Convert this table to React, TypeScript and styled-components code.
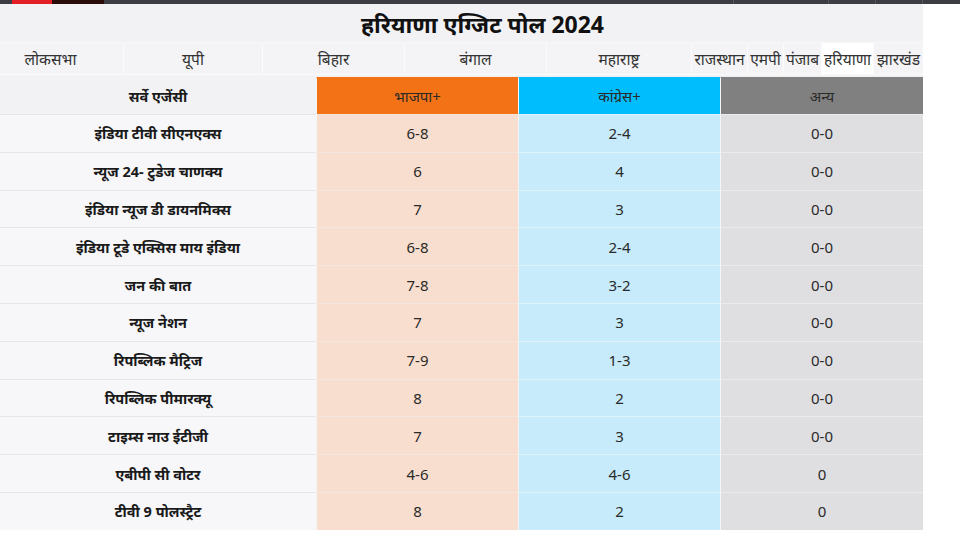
import React from 'react'
import styled, { createGlobalStyle } from 'styled-components'

const GlobalStyle = createGlobalStyle`
  html, body {
    margin: 0;
    padding: 0;
    background: #ffffff;
  }
  body {
    font-family: "Noto Sans", "Noto Sans Devanagari", "Open Sans", sans-serif;
    color: #222;
  }
`

const TopStrip = styled.div`
  height: 4px;
  background: #3b3d42;
  display: flex;
  padding-left: 12px;
`

const StripBlock = styled.div<{ $w: number; $c: string }>`
  width: ${(p) => p.$w}px;
  background: ${(p) => p.$c};
`

const StripSep = styled.div<{ $ml: number }>`
  width: 1px;
  margin-left: ${(p) => p.$ml}px;
  background: #55575c;
`

const Wrap = styled.div`
  width: 923px;
  background: #f2f2f4;
`

const Title = styled.h1`
  margin: 0;
  height: 38px;
  line-height: 40px;
  padding-left: 42px;
  text-align: center;
  font-size: 23px;
  font-weight: 700;
  color: #111;
`

const Tabs = styled.div`
  display: flex;
  height: 33px;
  border-top: 1px solid #f7f7f9;
  border-bottom: 1px solid #fbfbfc;
  box-sizing: border-box;
`

const Tab = styled.div<{ $w: number; $active?: boolean; $shift?: number }>`
  width: ${(p) => p.$w}px;
  flex: none;
  display: flex;
  align-items: center;
  justify-content: center;
  padding-right: ${(p) => p.$shift ?? 0}px;
  font-size: 15.5px;
  color: #333;
  white-space: nowrap;
  background: ${(p) => (p.$active ? '#ffffff' : '#f4f4f6')};
  border-right: 1px solid #fbfbfc;
  box-sizing: border-box;
  &:last-child {
    border-right: none;
  }
`

const Table = styled.div`
  margin-top: 2px;
  background: #ffffff;
`

const Row = styled.div<{ $head?: boolean }>`
  display: grid;
  grid-template-columns: 316px 202px 202px 1fr;
  height: ${(p) => (p.$head ? '37px' : '37.8px')};
`

const palette = {
  agency: { head: '#f2f2f4', body: '#f7f7f9', line: '#e6e6ea' },
  bjp: { head: '#f47216', body: '#f8dece', line: '#f3e6dc' },
  inc: { head: '#00bdfd', body: '#c7ebfa', line: '#e0f2fa' },
  oth: { head: '#808080', body: '#dfdfe1', line: '#ebebed' },
}

type Col = keyof typeof palette

const Cell = styled.div<{ $col: Col; $head?: boolean }>`
  display: flex;
  align-items: center;
  justify-content: center;
  font-size: ${(p) => (p.$col === 'agency' ? '14.5px' : '15px')};
  font-weight: ${(p) => (p.$col === 'agency' ? 700 : 400)};
  color: ${(p) => (p.$col === 'agency' ? '#1a1a1a' : '#2a2a2a')};
  background: ${(p) => (p.$head ? palette[p.$col].head : palette[p.$col].body)};
  border-top: 1px solid
    ${(p) => (p.$head ? palette[p.$col].head : palette[p.$col].line)};
  border-left: ${(p) => (p.$col === 'agency' ? 'none' : '1px solid #f5f5f5')};
  box-sizing: border-box;
  white-space: nowrap;
`

const tabs: [string, number][] = [
  ['लोकसभा', 124],
  ['यूपी', 139],
  ['बिहार', 142],
  ['बंगाल', 142],
  ['महाराष्ट्र', 145],
  ['राजस्थान', 56],
  ['एमपी', 36],
  ['पंजाब', 38],
  ['हरियाणा', 52],
  ['झारखंड', 49],
]

const rows: [string, string, string, string][] = [
  ['इंडिया टीवी सीएनएक्स', '6-8', '2-4', '0-0'],
  ['न्यूज 24- टुडेज चाणक्य', '6', '4', '0-0'],
  ['इंडिया न्यूज डी डायनमिक्स', '7', '3', '0-0'],
  ['इंडिया टूडे एक्सिस माय इंडिया', '6-8', '2-4', '0-0'],
  ['जन की बात', '7-8', '3-2', '0-0'],
  ['न्यूज नेशन', '7', '3', '0-0'],
  ['रिपब्लिक मैट्रिज', '7-9', '1-3', '0-0'],
  ['रिपब्लिक पीमारक्यू', '8', '2', '0-0'],
  ['टाइम्स नाउ ईटीजी', '7', '3', '0-0'],
  ['एबीपी सी वोटर', '4-6', '4-6', '0'],
  ['टीवी 9 पोलस्ट्रैट', '8', '2', '0'],
]

export default function App() {
  return (
    <>
      <GlobalStyle />
      <TopStrip>
        <StripBlock $w={40} $c="#e31e24" />
        <StripBlock $w={52} $c="#2b0b09" />
        <StripSep $ml={629} />
        <StripSep $ml={94} />
        <StripSep $ml={46} />
        <StripSep $ml={46} />
      </TopStrip>
      <Wrap>
        <Title>हरियाणा एग्जिट पोल 2024</Title>
        <Tabs>
          {tabs.map(([label, w], i) => (
            <Tab
              key={label}
              $w={w}
              $shift={i === 0 ? 22 : 0}
              $active={label === 'हरियाणा'}
            >
              {label}
            </Tab>
          ))}
        </Tabs>
        <Table>
          <Row $head>
            <Cell $col="agency" $head>
              सर्वे एजेंसी
            </Cell>
            <Cell $col="bjp" $head>
              भाजपा+
            </Cell>
            <Cell $col="inc" $head>
              कांग्रेस+
            </Cell>
            <Cell $col="oth" $head>
              अन्य
            </Cell>
          </Row>
          {rows.map(([agency, bjp, inc, oth]) => (
            <Row key={agency}>
              <Cell $col="agency">{agency}</Cell>
              <Cell $col="bjp">{bjp}</Cell>
              <Cell $col="inc">{inc}</Cell>
              <Cell $col="oth">{oth}</Cell>
            </Row>
          ))}
        </Table>
      </Wrap>
    </>
  )
}
